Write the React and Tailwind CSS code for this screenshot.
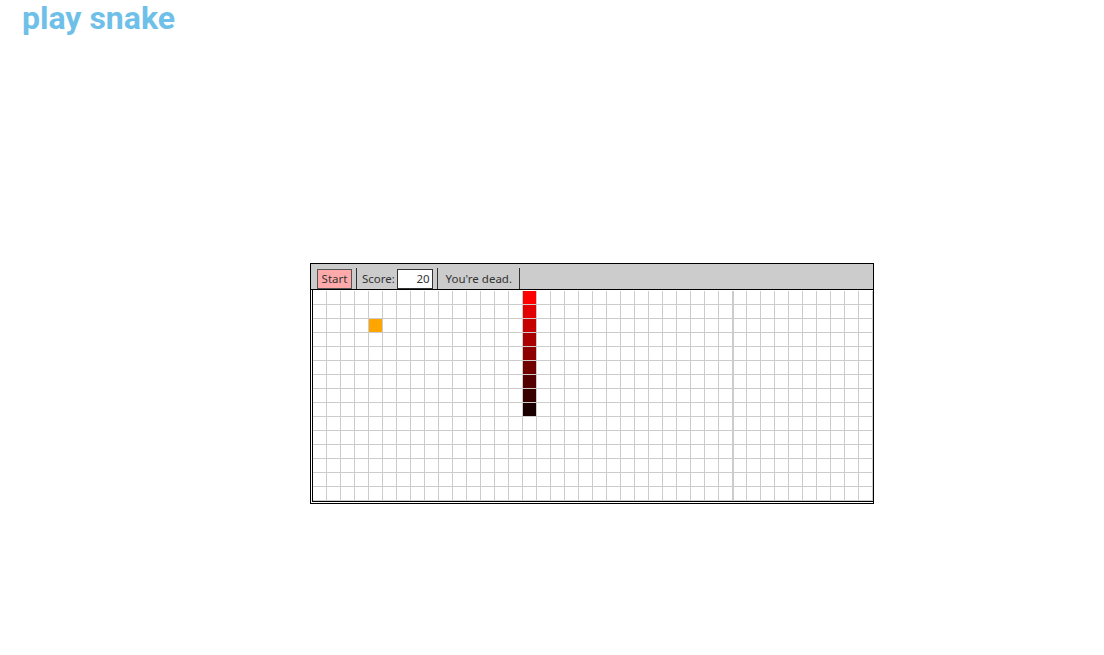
import React from "react";

const ROWS = 15;
const COLS = 40;

// snake body: column 15, rows 0..8, head bright red fading to near black
const snakeColors = [
  "bg-[#ff0000]",
  "bg-[#e30000]",
  "bg-[#c70000]",
  "bg-[#aa0000]",
  "bg-[#8e0000]",
  "bg-[#710000]",
  "bg-[#550000]",
  "bg-[#390000]",
  "bg-[#1c0000]",
];

const cellClass = (r, c) => {
  if (c === 15 && r < snakeColors.length) return snakeColors[r];
  if (r === 2 && c === 4) return "bg-[#ffa500]";
  return "bg-white";
};

const App = () => {
  return (
    <div className="min-h-[655px] bg-white">
      <h1
        className="pl-[22px] text-[32px] leading-[37px] font-bold text-[#6fc0e8]"
        style={{ fontFamily: "Roboto, sans-serif" }}
      >
        play snake
      </h1>

      <div
        className="ml-[310px] mt-[226px] w-[564px] border border-black bg-white"
        style={{ fontFamily: "'Noto Sans', 'Open Sans', sans-serif" }}
      >
        <div className="flex h-[26px] items-end border-b border-black bg-[#cccccc] pl-[6px] text-[11.5px] text-[#333]">
          <button className="h-[20px] w-[35px] border border-[#555] bg-[#ffaaaa] text-center leading-[18px] text-[#333]">
            Start
          </button>
          <div className="ml-[4px] h-[21px] w-px bg-[#333]" />
          <span className="ml-[5px] h-[20px] leading-[20px]">Score:</span>
          <span className="ml-auto h-[20px] w-[36px] border border-[#333] bg-white pr-[2px] text-right leading-[18px]">
            20
          </span>
          <div className="ml-[4px] h-[21px] w-px bg-[#333]" />
          <span className="ml-[8px] h-[20px] leading-[20px]">You're dead.</span>
          <div className="ml-[7px] mr-[353px] h-[21px] w-px bg-[#333]" />
        </div>

        <div className="ml-px mb-px overflow-hidden border-b border-l border-black pt-px">
          {Array.from({ length: ROWS }).map((_, r) => (
            <div key={r} className="flex">
              {Array.from({ length: COLS }).map((_, c) => (
                <div
                  key={c}
                  className={`h-[14px] w-[14px] shrink-0 border-b border-r border-[#cccccc] ${
                    c === 30 ? "border-l" : ""
                  } ${cellClass(r, c)}`}
                />
              ))}
            </div>
          ))}
        </div>
      </div>
    </div>
  );
};

export default App;
